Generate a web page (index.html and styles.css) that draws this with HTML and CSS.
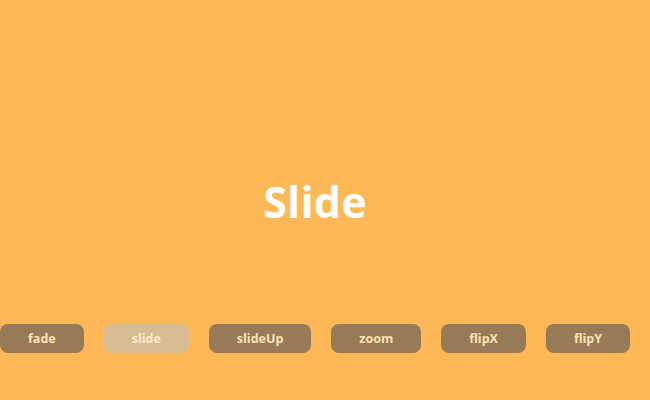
FILE: index.html
```html
<!DOCTYPE html>
<html lang="en">
<head>
<meta charset="utf-8">
<title>Slide</title>
<link rel="stylesheet" href="styles.css">
</head>
<body>
  <main class="stage">
    <h1 class="title">Slide</h1>
    <nav class="effects">
      <button class="effect">fade</button>
      <button class="effect is-active">slide</button>
      <button class="effect">slideUp</button>
      <button class="effect">zoom</button>
      <button class="effect">flipX</button>
      <button class="effect">flipY</button>
    </nav>
  </main>
</body>
</html>
```
FILE: styles.css
```css
html, body {
  margin: 0;
  height: 100%;
}

body {
  background: #ffb857;
  font-family: "Open Sans", "DejaVu Sans", sans-serif;
  overflow: hidden;
}

.stage {
  display: flex;
  flex-direction: column;
  align-items: center;
  width: 650px;
  height: 400px;
}

.title {
  margin: 178px 0 0 -20px;
  font-size: 43px;
  line-height: 48px;
  font-weight: 700;
  color: #ffffff;
  letter-spacing: 0.2px;
}

.effects {
  display: flex;
  align-self: flex-start;
  gap: 20px;
  margin-top: 98px;
}

.effect {
  height: 29px;
  padding: 0 28px;
  border: 0;
  border-radius: 8px;
  background: #977b56;
  color: #ffe2b6;
  font-family: inherit;
  font-size: 12.5px;
  font-weight: 700;
  line-height: 29px;
  letter-spacing: 0;
}

.effect.is-active {
  background: #d6bb93;
  color: #ffeccd;
}
```
